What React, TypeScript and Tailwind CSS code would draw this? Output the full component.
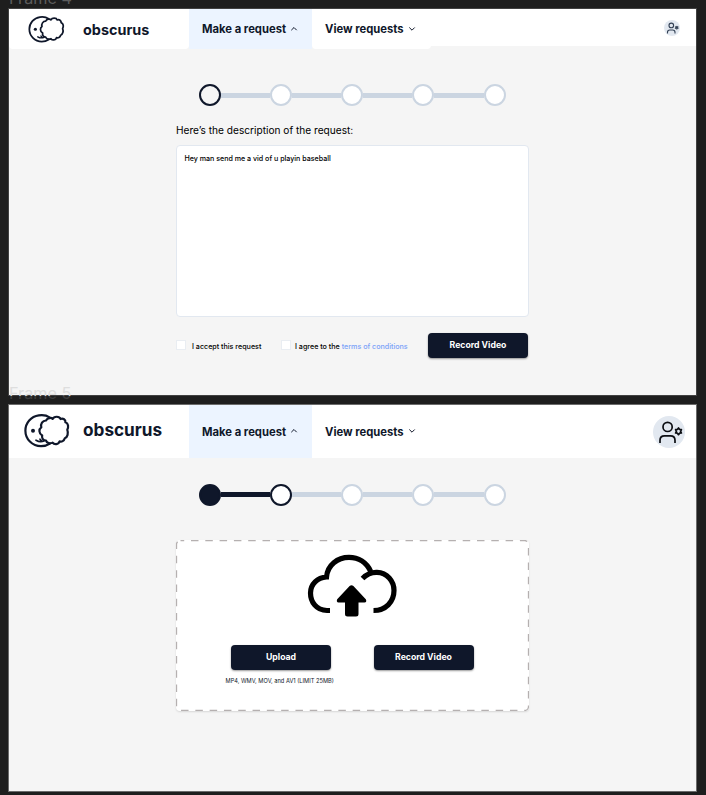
import React from "react";

function Logo({ className }: { className: string }) {
  return (
    <svg viewBox="0 0 46 34" className={className} fill="none" stroke="#0f172a" strokeWidth="2.200" strokeLinecap="round" strokeLinejoin="round">
      <path d="M25.500 3.400C22.500 1.300 18.500 .9 14.800 1.400C7 2.400 1.400 9 1.400 16.700C1.400 25 8.200 32.200 17 32.200C20.300 32.200 23.400 31.200 26 29.500" />
      <path d="M22 6.500C23.500 3.600 27.500 3.400 28.600 4.900C30 2 35.500 2 36.500 5C39 3.800 41.800 5.800 41.400 8.300C44.600 9.300 44.600 13.300 43.300 15.800C44.600 19 43.600 23.400 40.800 24.200C40 27 37.600 28.100 35.600 27.300C34.600 30.800 30.200 31 28.600 28.600C26 30 22.700 29 22 26.600C18.800 26.200 17.500 23.800 18.200 21.500C14.600 19.500 14.700 15 17.300 13.300C16.300 10 18.500 6.500 22 6.500Z" />
      <path d="M12 26.200C14.500 27.700 17.500 27.900 20 26.900M16 25.200L18 27.400" strokeWidth="1.700" />
      <circle cx="9" cy="16.700" r="2" fill="#0f172a" stroke="none" />
    </svg>
  );
}

function Chevron({ up = false }: { up?: boolean }) {
  return (
    <svg viewBox="0 0 8 6" className="mb-[2px] h-[6px] w-[8px] shrink-0" fill="none" stroke="#0f172a" strokeWidth="1">
      <path d={up ? "M1.300 4.200L4 1.500L6.700 4.200" : "M1.300 1.500L4 4.200L6.700 1.500"} />
    </svg>
  );
}

function UserIcon({ className, small = false }: { className: string; small?: boolean }) {
  return (
    <svg viewBox="0 0 32 32" className={className}>
      <circle cx="16" cy="16" r="16" fill="#e2e8f0" />
      <g fill="none" stroke={small ? "#334155" : "#0b0d12"} strokeWidth={small ? 2.2 : 1.7}>
        <circle cx="14.600" cy="10.900" r="4.600" />
        <path d="M7 27V24.300C7 21.500 8.800 19.900 11.500 19.900H17.500C20.300 19.900 22 21.500 22 24.300V27" />
        <path
          d="M25.500 11.900L26.600 13.400L28.400 13.600L27.600 15.300L28.400 17L26.600 17.200L25.500 18.700L24.400 17.200L22.600 17L23.400 15.300L22.600 13.600L24.400 13.400Z"
          strokeWidth="1.700"
          strokeLinejoin="round"
          fill={small ? "#334155" : "none"}
        />
      </g>
    </svg>
  );
}

function Stepper({ active }: { active: number }) {
  return (
    <div className="flex w-[307px] items-center">
      {[0, 1, 2, 3, 4].map((i) => (
        <React.Fragment key={i}>
          {i > 0 && <div className={`h-[5px] flex-1 ${i <= active ? "bg-[#0f172a]" : "bg-[#cbd5e1]"}`} />}
          <div
            className={`size-[22px] shrink-0 rounded-full border-2 ${
              i < active
                ? "border-[#0f172a] bg-[#0f172a]"
                : i > active
                  ? "border-[#cbd5e1] bg-white"
                  : active === 0
                    ? "border-[#0f172a] bg-[#f5f5f5]"
                    : "border-[#0f172a] bg-white"
            }`}
          />
        </React.Fragment>
      ))}
    </div>
  );
}

function Button({ children }: { children: string }) {
  return (
    <button className="h-[25px] w-[100px] shrink-0 rounded-[4px] bg-[#0f172a] pt-[1px] text-[8.700px] font-bold text-white shadow-[0_1px_2px_rgba(0,0,0,0.4)]">
      {children}
    </button>
  );
}

function MenuItems({ rounded = false }: { rounded?: boolean }) {
  return (
    <>
      <div className="flex w-[123px] items-center gap-[4px] bg-[#ecf4ff] pt-[1px] pl-[13px] text-[11.250px] font-bold whitespace-nowrap text-[#0f172a]">
        Make a request
        <Chevron up />
      </div>
      <div className={`flex w-[119px] items-center gap-[4px] bg-white pt-[1px] pl-[13px] text-[11.250px] font-bold whitespace-nowrap text-[#0f172a] ${rounded ? "rounded-b-[4px]" : ""}`}>
        View requests
        <Chevron />
      </div>
    </>
  );
}

export default function App() {
  return (
    <div className="relative h-[795px] w-[706px] overflow-hidden bg-[#1e1e1e] pt-[9px] pl-[9px] font-['Inter','Liberation_Sans',sans-serif]">
      <span className="absolute top-[-12px] left-[9px] text-[16.200px] leading-[20px] whitespace-nowrap text-[#5c5c5c]">Frame 4</span>

      <section className="h-[386px] w-[687px] bg-[#f5f5f5] outline outline-[#414141]">
        <header className="flex h-[40px]">
          <div className="flex w-[180px] items-center rounded-b-[4px] bg-white pl-[19px]">
            <Logo className="h-[27px] w-[37px]" />
            <span className="ml-[18px] pt-[2px] text-[14.400px] font-bold text-[#0f172a]">obscurus</span>
          </div>
          <MenuItems rounded />
          <div className="flex h-[37px] flex-1 items-center justify-end bg-white pr-[16px]">
            <UserIcon className="size-[16px]" small />
          </div>
        </header>
        <main className="ml-[167px] w-[353px] pt-[35.400px]">
          <div className="ml-[22.700px]"><Stepper active={0} /></div>
          <h2 className="mt-[15.600px] text-[10.150px] leading-[16px] text-black">Here’s the description of the request:</h2>
          <div className="mt-[7px] h-[172px] rounded-[4px] border border-[#e2e8f0] bg-white px-[7.400px] pt-[7px] text-[7.100px] leading-[12px] font-medium text-black">
            Hey man send me a vid of u playin baseball
          </div>
          <div className="mt-[16px] flex h-[25px] items-center text-[7.150px] font-medium whitespace-nowrap text-black">
            <span className="size-[10px] border border-[#e9edf2] bg-white" />
            <span className="ml-[6px] w-[89px] pt-[3px]">I accept this request</span>
            <span className="size-[10px] border border-[#e9edf2] bg-white" />
            <span className="ml-[4px] w-[133px] pt-[3px]">I agree to the <span className="text-[#7ba2f8]">terms of conditions</span></span>
            <Button>Record Video</Button>
          </div>
        </main>
      </section>

      <div className="h-[10px]" />
      <span className="absolute top-[383px] left-[9px] text-[16.200px] leading-[20px] whitespace-nowrap text-[#dedede]">
        Frame 5
      </span>
      <div className="absolute top-[396px] left-[9px] h-[8px] w-[687px] bg-[#1e1e1e]/85" />

      <section className="h-[386px] w-[687px] bg-[#f5f5f5] outline outline-[#6b6b6b]">
        <header className="flex h-[53px] bg-white">
          <div className="flex w-[180px] items-center pl-[15px]">
            <Logo className="mb-[2px] h-[34px] w-[46px]" />
            <span className="mb-[4px] ml-[13px] text-[17.200px] font-bold text-[#0f172a]">obscurus</span>
          </div>
          <MenuItems />
          <div className="flex flex-1 items-center justify-end pr-[11px]">
            <UserIcon className="size-[32px]" />
          </div>
        </header>
        <main className="ml-[167px] w-[353px] pt-[25.500px]">
          <div className="ml-[22.700px]"><Stepper active={1} /></div>
          <div className="relative mt-[34.500px] h-[171px] rounded-[4px] bg-white shadow-[0_1px_2px_rgba(0,0,0,0.12)]">
            <svg className="absolute inset-0 h-[171px] w-[353px]" fill="none" stroke="#b5b0b0" strokeWidth="1.300">
              <rect x=".5" y=".5" width="352" height="170" rx="4" strokeDasharray="7.500 6.800" strokeDashoffset="-10.500" />
            </svg>
            <svg viewBox="0 0 90 66" className="absolute top-[13px] left-[131px] h-[66px] w-[90px]">
              <path d="M23 57.500H20C9 57.500 3.500 48.500 3.500 40C3.500 31 10.500 24.500 19.500 24C20.500 12 30.500 4.300 42 4.300C51.500 4.300 59.500 9.500 63.500 18M55.500 25.500C60 21 65 19.200 70 19.400C80 19.700 87 28 87 37.500C87 49 78.500 57.500 66.500 57.500" fill="none" stroke="#000" strokeWidth="5.200" />
              <path d="M42.600 33.100Q44.500 31.200 46.400 33.100L58.800 46.300Q60.200 49.200 57.500 49.500H51.500V61Q51.500 63.500 49 63.500H40.500Q38 63.500 38 61V49.500H31.500Q29 49.200 30.200 46.300Z" fill="#000" />
            </svg>
            <div className="relative flex gap-[42.500px] pt-[105px] pl-[55px]">
              <Button>Upload</Button>
              <Button>Record Video</Button>
            </div>
            <p className="relative mt-[6px] ml-[49.500px] text-[5.700px] leading-[10px] whitespace-nowrap text-[#0f172a]">MP4, WMV, MOV, and AV1 (LIMIT 25MB)</p>
          </div>
        </main>
      </section>
    </div>
  );
}
